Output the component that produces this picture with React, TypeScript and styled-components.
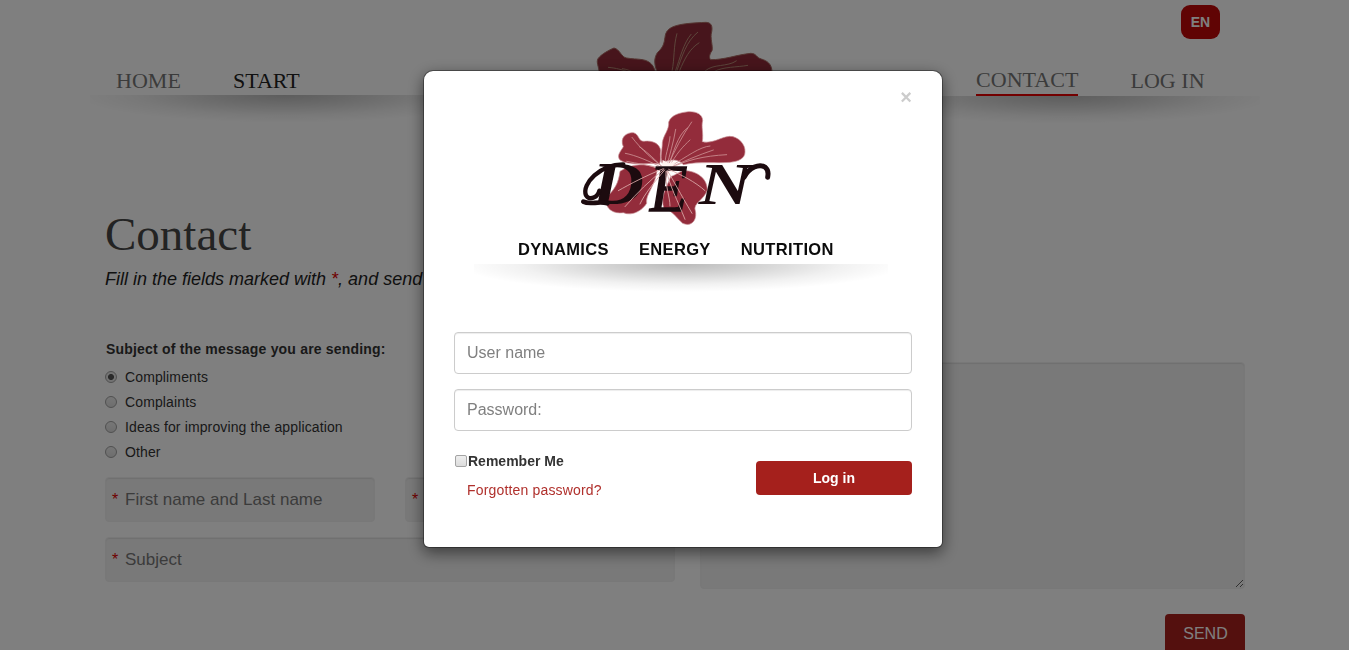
import React from "react";
import styled, { createGlobalStyle } from "styled-components";

const GlobalStyle = createGlobalStyle`
  * { box-sizing: border-box; }
  html, body { margin: 0; height: 100%; overflow: hidden; background: #fff; }
  body, input, textarea, button { font-family: "Liberation Sans", Arial, sans-serif; }
`;

const Page = styled.div`
  height: 650px;
  overflow: hidden;
  color: #333;
  font-size: 14px;
`;

const Header = styled.header`
  width: 1170px;
  height: 130px;
  margin-left: 90px;
  display: grid;
  grid-template-columns: 390px 390px 390px;
`;

const NavSide = styled.div<{ $top: number }>`
  display: flex;
  flex-direction: column;
  padding-top: ${(p) => p.$top}px;
`;

const LangRow = styled.div`
  display: flex;
  justify-content: flex-end;
  height: 62px;
  padding-right: 40px;
`;

const LangButton = styled.button`
  width: 39px;
  height: 34px;
  padding: 0;
  border: 0;
  border-radius: 9px;
  background: #c10808;
  color: #fff;
  font-size: 14px;
  font-weight: bold;
`;

const Nav = styled.nav<{ $start: number; $gap: number }>`
  display: flex;
  align-items: flex-start;
  gap: ${(p) => p.$gap}px;
  height: 29px;
  padding-left: ${(p) => p.$start}px;
`;

const NavLink = styled.a<{ $tone?: string; $active?: boolean; $drop?: number }>`
  height: 29px;
  padding-top: ${(p) => p.$drop || 0}px;
  border-bottom: ${(p) => (p.$active ? "2px solid #e60000" : "0")};
  color: ${(p) => p.$tone || "#777"};
  font: 22px/26px "Liberation Serif", "Times New Roman", serif;
  letter-spacing: 0.04px;
  white-space: nowrap;
`;

const Shade = styled.div<{ $height: number; $alpha: number }>`
  height: ${(p) => p.$height}px;
  background: radial-gradient(
    54% 100% at 50% 0,
    rgba(0, 0, 0, ${(p) => p.$alpha}) 0%,
    rgba(0, 0, 0, ${(p) => p.$alpha * 0.62}) 35%,
    rgba(0, 0, 0, ${(p) => p.$alpha * 0.2}) 72%,
    rgba(0, 0, 0, 0) 100%
  );
`;

const HeaderLogo = styled.div`
  padding: 10px 0 0 100px;
`;

const Content = styled.main`
  width: 1140px;
  margin-left: 105px;
`;

const Title = styled.h1`
  margin: 0;
  padding-top: 77px;
  color: #464646;
  font: 47px/54px "Liberation Serif", "Times New Roman", serif;
`;

const Intro = styled.p`
  margin: 7px 0 0;
  color: #222;
  font-size: 18px;
  line-height: 22px;
  font-style: italic;
`;

const Star = styled.span`
  color: #e00000;
`;

const FieldStar = styled(Star)`
  width: 7px;
  font-size: 16px;
  line-height: 18px;
  padding-top: 1px;
`;

const Form = styled.form`
  display: grid;
  grid-template-columns: 570px 545px;
  column-gap: 25px;
  margin-top: 50px;
`;

const Fields = styled.div`
  display: flex;
  flex-direction: column;
`;

const Legend = styled.div`
  height: 24px;
  padding-left: 1px;
  font-size: 14px;
  line-height: 18px;
  font-weight: bold;
  letter-spacing: 0.19px;
`;

const Option = styled.label`
  display: flex;
  align-items: center;
  gap: 8px;
  height: 25px;
  font-size: 14px;
  letter-spacing: 0.13px;
`;

const Radio = styled.input`
  appearance: none;
  width: 12px;
  height: 12px;
  margin: 0;
  border: 1px solid #a0a0a0;
  border-radius: 50%;
  background: linear-gradient(#eee, #dcdcdc);
  &:checked {
    background: radial-gradient(circle, #555 0 2.6px, #e6e6e6 3.4px);
  }
`;

const FieldRow = styled.div`
  display: flex;
  gap: 30px;
  margin-top: 13px;
  & + & { margin-top: 15px; }
`;

const FieldBox = styled.div`
  display: flex;
  align-items: center;
  flex: 1;
  min-width: 0;
  height: 45px;
  padding-left: 6px;
  gap: 6px;
  border: 1px solid #f0f0f0;
  border-radius: 4px;
  background: #f2f2f2;
  box-shadow: inset 0 1px 1px rgba(0, 0, 0, 0.075);
`;

const FieldInput = styled.input`
  flex: 1;
  min-width: 0;
  padding: 0;
  border: 0;
  outline: 0;
  background: transparent;
  font-size: 17px;
  &::placeholder { color: #777; }
`;

const MessageColumn = styled.div`
  display: flex;
  flex-direction: column;
  align-items: flex-end;
  padding-top: 22px;
`;

const Message = styled.textarea`
  display: block;
  width: 545px;
  height: 227px;
  border: 1px solid #f0f0f0;
  border-radius: 4px;
  background: #f2f2f2;
  box-shadow: inset 0 1px 1px rgba(0, 0, 0, 0.075);
`;

const Send = styled.button`
  width: 80px;
  height: 40px;
  margin-top: 25px;
  padding: 0 0 0 1px;
  border: 0;
  border-radius: 4px;
  background: #a9201d;
  color: #fff;
  font-size: 16px;
`;

const Backdrop = styled.div`
  position: fixed;
  inset: 0;
  background: rgba(0, 0, 0, 0.5);
`;

const Modal = styled.section`
  position: fixed;
  left: 423px;
  top: 70px;
  width: 520px;
  height: 478px;
  padding: 0 30px;
  display: flex;
  flex-direction: column;
  border: 1px solid rgba(0, 0, 0, 0.35);
  border-radius: 10px 10px 6px 6px;
  background: #fff;
  background-clip: padding-box;
  box-shadow: 0 5px 15px rgba(0, 0, 0, 0.5);
  color: #333;
`;

const CloseRow = styled.div`
  display: flex;
  justify-content: flex-end;
  height: 29px;
  padding-top: 15px;
`;

const Close = styled.button`
  width: 12px;
  height: 22px;
  padding: 0;
  border: 0;
  background: none;
  color: #ccc;
  font-size: 20px;
  line-height: 21px;
  font-weight: bold;
`;

const Brand = styled.div`
  height: 232px;
  padding-left: 20px;
`;

const BrandMark = styled.div`
  height: 135px;
  padding-left: 96px;
`;

const BrandWords = styled.div`
  display: flex;
  gap: 30px;
  height: 29px;
  padding: 4px 0 0 44px;
  color: #0b0b0b;
  font-size: 16.5px;
  line-height: 20px;
  font-weight: bold;
  letter-spacing: 0.36px;
`;

const BrandShade = styled.div`
  width: 414px;
`;

const LoginInput = styled.input`
  width: 458px;
  height: 42px;
  flex: none;
  margin-bottom: 15px;
  padding: 0 12px;
  border: 1px solid #ccc;
  border-radius: 4px;
  background: #fff;
  box-shadow: inset 0 1px 1px rgba(0, 0, 0, 0.075);
  font-size: 16px;
  &::placeholder { color: #808080; }
`;

const LoginFooter = styled.div`
  display: flex;
  justify-content: space-between;
  padding-top: 6px;
`;

const Remember = styled.label`
  display: flex;
  align-items: center;
  gap: 1px;
  height: 18px;
  padding-left: 1px;
  font-weight: bold;
  font-size: 14px;
`;

const Check = styled.input`
  appearance: none;
  width: 12px;
  height: 12px;
  margin: 0;
  border: 1px solid #a4a4a4;
  border-radius: 2px;
  background: linear-gradient(#eee, #dcdcdc);
`;

const Forgot = styled.a`
  display: block;
  margin: 11px 0 0 13px;
  color: #b0302c;
  font-size: 14px;
  line-height: 18px;
  letter-spacing: 0.17px;
`;

const LoginButton = styled.button`
  width: 156px;
  height: 34px;
  margin-top: 9px;
  border: 0;
  border-radius: 4px;
  background: #a5201c;
  color: #fff;
  font-size: 14px;
  font-weight: bold;
`;

function Emblem() {
  return (
    <svg width="210" height="135" viewBox="0 0 630 405" aria-label="DEN">
      <g fill="#932c3b" stroke="#c98f96" strokeWidth="2">
        <path d="M276 190 C270 165 277 150 277 128 C280 105 298 90 296 66 C304 44 330 38 355 35 C378 34 398 42 398 62 C393 80 401 98 397 125 C428 132 450 112 478 109 C504 108 527 133 525 156 C525 176 505 184 480 187 C440 190 385 184 340 194 C330 178 300 174 276 190Z" />
        <path d="M268 192 C230 186 180 200 150 180 C138 166 154 152 160 140 C148 112 170 97 190 98 C208 102 204 124 222 124 C248 120 270 132 272 152 C269 166 275 180 268 192Z" />
        <path d="M262 206 C230 190 190 188 150 214 C145 250 136 266 108 294 C105 328 130 342 160 338 C188 350 218 330 230 310 C226 282 256 260 262 206Z" />
        <path d="M302 230 C290 262 270 290 282 326 C306 330 318 352 338 370 C366 382 382 358 376 332 C368 310 402 300 412 270 C412 236 382 212 342 212 C326 216 318 224 302 230Z" />
      </g>
      <g fill="none" stroke="#cf9497" strokeWidth="2.4" strokeLinecap="round">
        <path d="M290 200 C300 160 310 130 317 88M292 200 C315 150 335 110 365 66M294 201 C310 160 322 105 352 84M296 202 C320 160 338 140 360 120M286 198 C282 170 298 140 300 110" />
        <path d="M300 202 C340 185 385 165 430 150M300 200 C350 170 390 140 420 138M302 204 C350 180 400 168 470 164" />
        <path d="M280 202 C250 180 215 150 186 112M278 204 C240 184 195 165 166 160M274 198 C246 170 226 152 208 140M276 206 C235 195 200 190 170 184" />
      </g>
      <path d="M278 180 L296 190 L318 184 L306 202 L330 210 L300 216 L280 234 L278 211 L258 206 L276 198Z" fill="#fff2ee" />
      <g
        fill="#1c0b0f"
        fontFamily="'Liberation Serif', 'Times New Roman', serif"
        fontStyle="italic"
        fontWeight="bold"
      >
        <text x="66" y="313" fontSize="182" textLength="156" lengthAdjust="spacingAndGlyphs">D</text>
        <text x="240" y="334" fontSize="206" fontWeight="normal" stroke="#1c0b0f" strokeWidth="5" textLength="112" lengthAdjust="spacingAndGlyphs">E</text>
        <text x="386" y="313" fontSize="176" textLength="160" lengthAdjust="spacingAndGlyphs">N</text>
      </g>
      <g fill="none" stroke="#1c0b0f" strokeLinecap="round">
        <path d="M160 193 C92 192 34 252 48 286 C60 304 84 290 88 272" strokeWidth="13" />
        <path d="M40 305 C60 316 84 302 112 310" strokeWidth="14" />
        <path d="M522 232 C538 202 568 190 586 202 C598 212 594 222 593 232" strokeWidth="15" />
      </g>
      <g fill="none" stroke="#dba9a8" strokeWidth="2.6" strokeLinecap="round">
        <path d="M280 206 C230 226 180 252 145 272M282 208 C240 240 200 280 165 320M284 210 C250 250 225 280 210 312" />
        <path d="M292 212 C310 240 330 280 366 340M290 214 C300 260 322 300 345 358M296 208 C335 225 375 245 405 272M288 214 C285 260 300 290 300 318" />
      </g>
    </svg>
  );
}

function LargeFlower() {
  return (
    <svg width="210" height="110" viewBox="0 0 630 330">
      <g fill="#8f2a38" stroke="#a96a62" strokeWidth="3">
        <path d="M230 182 C222 160 222 145 232 128 C254 108 252 96 256 76 C262 46 302 40 378 37 C394 38 398 48 395 66 C389 82 400 110 396 122 C386 136 388 146 392 149 C430 150 472 134 512 130 C530 130 528 143 544 147 C580 158 580 182 570 220 L400 270 L250 250Z" />
        <path d="M58 190 C56 166 48 158 54 146 C64 132 88 120 102 114 C120 118 124 142 140 144 C172 150 204 142 220 170 L260 260 L80 260Z" />
      </g>
      <g fill="none" stroke="#b98b76" strokeWidth="3">
        <path d="M276 184 C284 145 280 110 291 70M286 184 C300 145 310 100 334 72M290 184 C306 140 318 95 354 66M298 184 C314 145 330 115 358 98" />
        <path d="M374 184 C400 160 442 172 470 152M404 184 C430 170 470 172 504 166M84 172 C110 174 126 180 140 184M126 176 C142 178 148 182 154 184" />
      </g>
    </svg>
  );
}

const subjects = ["Compliments", "Complaints", "Ideas for improving the application", "Other"];

export default function App() {
  return (
    <>
      <GlobalStyle />
      <Page>
        <Header>
          <NavSide $top={66}>
            <Nav $start={26} $gap={52}>
              <NavLink $drop={2}>HOME</NavLink>
              <NavLink $drop={2} $tone="#222">START</NavLink>
            </Nav>
            <Shade $height={28} $alpha={0.27} />
          </NavSide>
          <HeaderLogo>
            <LargeFlower />
          </HeaderLogo>
          <NavSide $top={5}>
            <LangRow>
              <LangButton>EN</LangButton>
            </LangRow>
            <Nav $start={106} $gap={52}>
              <NavLink $active>CONTACT</NavLink>
              <NavLink $drop={1}>LOG IN</NavLink>
            </Nav>
            <Shade $height={28} $alpha={0.27} />
          </NavSide>
        </Header>
        <Content>
          <Title>Contact</Title>
          <Intro>
            Fill in the fields marked with <Star>*</Star>, and send
          </Intro>
          <Form>
            <Fields>
              <Legend>Subject of the message you are sending:</Legend>
              {subjects.map((s, i) => (
                <Option key={s}>
                  <Radio type="radio" name="subject" defaultChecked={i === 0} />
                  {s}
                </Option>
              ))}
              <FieldRow>
                <FieldBox>
                  <FieldStar>*</FieldStar>
                  <FieldInput placeholder="First name and Last name" />
                </FieldBox>
                <FieldBox>
                  <FieldStar>*</FieldStar>
                  <FieldInput />
                </FieldBox>
              </FieldRow>
              <FieldRow>
                <FieldBox>
                  <FieldStar>*</FieldStar>
                  <FieldInput placeholder="Subject" />
                </FieldBox>
              </FieldRow>
            </Fields>
            <MessageColumn>
              <Message />
              <Send type="button">SEND</Send>
            </MessageColumn>
          </Form>
        </Content>
      </Page>
      <Backdrop />
      <Modal role="dialog">
        <CloseRow>
          <Close>×</Close>
        </CloseRow>
        <Brand>
          <BrandMark>
            <Emblem />
          </BrandMark>
          <BrandWords>
            <span>DYNAMICS</span>
            <span>ENERGY</span>
            <span>NUTRITION</span>
          </BrandWords>
          <BrandShade>
            <Shade $height={28} $alpha={0.27} />
          </BrandShade>
        </Brand>
        <LoginInput placeholder="User name" />
        <LoginInput type="password" placeholder="Password:" />
        <LoginFooter>
          <div>
            <Remember>
              <Check type="checkbox" />
              Remember Me
            </Remember>
            <Forgot>Forgotten password?</Forgot>
          </div>
          <LoginButton>Log in</LoginButton>
        </LoginFooter>
      </Modal>
    </>
  );
}
